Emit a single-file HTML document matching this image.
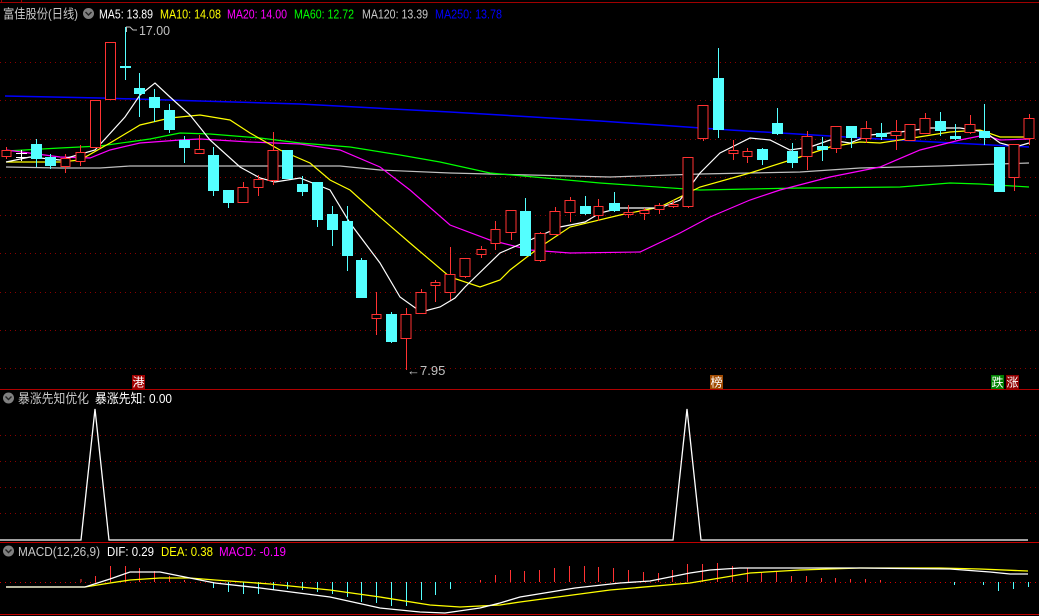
<!DOCTYPE html>
<html><head><meta charset="utf-8"><style>
html,body{margin:0;padding:0;background:#000;width:1039px;height:616px;overflow:hidden}
svg{position:absolute;left:0;top:0}
text{font-family:"Liberation Sans","Noto Sans CJK SC",sans-serif;font-size:13px}
</style></head><body>
<svg width="1039" height="616" viewBox="0 0 1039 616" xmlns="http://www.w3.org/2000/svg">
<rect width="1039" height="616" fill="#000"/>
<line x1="0" y1="2.5" x2="1039" y2="2.5" stroke="#a00000"/>
<line x1="1.5" y1="0" x2="1.5" y2="3" stroke="#a00000"/>
<line x1="21.5" y1="0" x2="21.5" y2="3" stroke="#a00000"/>
<line x1="0" y1="389.5" x2="1039" y2="389.5" stroke="#b00000"/>
<line x1="0" y1="542.5" x2="1039" y2="542.5" stroke="#c00000"/>
<line x1="0" y1="614.5" x2="1039" y2="614.5" stroke="#c00000"/>
<g stroke="#8a0000" stroke-dasharray="1,4">
<line x1="0" y1="62.5" x2="1039" y2="62.5"/>
<line x1="0" y1="100.5" x2="1039" y2="100.5"/>
<line x1="0" y1="139.5" x2="1039" y2="139.5"/>
<line x1="0" y1="177.5" x2="1039" y2="177.5"/>
<line x1="0" y1="215.5" x2="1039" y2="215.5"/>
<line x1="0" y1="253.5" x2="1039" y2="253.5"/>
<line x1="0" y1="292.5" x2="1039" y2="292.5"/>
<line x1="0" y1="330.5" x2="1039" y2="330.5"/>
<line x1="0" y1="368.5" x2="1039" y2="368.5"/>
<line x1="0" y1="435.5" x2="1039" y2="435.5"/>
<line x1="0" y1="461.5" x2="1039" y2="461.5"/>
<line x1="0" y1="487.5" x2="1039" y2="487.5"/>
<line x1="0" y1="513.5" x2="1039" y2="513.5"/>
<line x1="0" y1="582.5" x2="1039" y2="582.5" stroke="#d00000"/>
</g>
<g fill="none" stroke-width="1.2">
<polyline stroke="#0000ff" stroke-width="1.5" points="5,96 100,98 200,101 300,104 450,112 600,121 730,130 897,140 1029,147"/>
<polyline stroke="#c0c0c0" points="6,167 60,168 100,168 130,166 340,166 380,170 450,173 530,175 610,177 700,174 800,172 860,168 940,166 1029,163"/>
<polyline stroke="#00ff00" points="6,151 60,148 100,146 150,139 180,133 210,134 260,138 300,143 350,147 400,155 440,162 490,173 600,183 700,190 800,188 900,187 950,183 980,184 1029,187"/>
<polyline stroke="#ff00ff" points="6,150 60,157 90,158 110,150 140,143 180,140 200,139 250,142 300,144 340,150 380,167 410,190 450,225 490,240 530,250 570,253 640,252 680,233 710,217 750,200 780,190 830,177 880,167 920,150 960,140 985,135 1000,140 1029,139"/>
<polyline stroke="#ffff00" points="6,162 60,162 80,160 110,143 140,125 170,118 200,115 230,120 250,133 280,150 310,163 330,180 350,190 380,217 410,243 450,277 480,287 500,280 510,270 540,247 570,227 620,215 660,207 700,187 750,173 800,157 830,147 860,142 880,143 900,140 950,132 980,130 1000,137 1029,137"/>
<polyline stroke="#ffffff" points="6,162 30,157 60,160 95,150 125,117 140,95 155,83 170,97 190,115 210,140 240,167 260,178 275,182 300,178 330,190 350,223 380,263 400,297 421,312 440,307 455,298 465,287 500,253 530,240 560,227 585,222 600,213 620,208 660,208 680,200 700,173 720,153 750,138 770,140 790,150 810,147 830,140 850,143 870,135 900,132 930,128 960,128 985,132 1000,143 1015,147 1029,143"/>
</g>
<g stroke-width="1">
<g stroke="#ff3232" fill="#000">
<line x1="6.5" y1="147" x2="6.5" y2="159"/><rect x="2" y="150.5" width="9" height="6"/>
<line x1="65.5" y1="154" x2="65.5" y2="173"/><rect x="61" y="158.5" width="9" height="8"/>
<line x1="80.5" y1="145" x2="80.5" y2="166"/><rect x="76" y="152.5" width="9" height="9"/>
<rect x="90.5" y="100.5" width="10" height="47"/>
<rect x="105.5" y="42.5" width="10" height="57"/>
<line x1="199.5" y1="135" x2="199.5" y2="153"/><rect x="195" y="149.5" width="9" height="4"/>
<line x1="243.5" y1="182" x2="243.5" y2="203"/><rect x="238" y="187.5" width="10" height="15"/>
<line x1="258.5" y1="175" x2="258.5" y2="196"/><rect x="254" y="179.5" width="9" height="8"/>
<line x1="273.5" y1="132" x2="273.5" y2="185"/><rect x="268" y="150.5" width="10" height="30"/>
<line x1="376.5" y1="292" x2="376.5" y2="335"/><rect x="372" y="314.5" width="9" height="4"/>
<line x1="406.5" y1="308" x2="406.5" y2="370"/><rect x="401" y="314.5" width="10" height="24"/>
<line x1="421.5" y1="289" x2="421.5" y2="314"/><rect x="416" y="292.5" width="10" height="21"/>
<line x1="435.5" y1="280" x2="435.5" y2="302"/><rect x="431" y="282.5" width="9" height="3"/>
<line x1="450.5" y1="247" x2="450.5" y2="300"/><rect x="445" y="274.5" width="10" height="18"/>
<line x1="465.5" y1="258" x2="465.5" y2="278"/><rect x="460" y="258.5" width="10" height="18"/>
<line x1="481.5" y1="246" x2="481.5" y2="258"/><rect x="477" y="249.5" width="9" height="5"/>
<line x1="495.5" y1="221" x2="495.5" y2="250"/><rect x="491" y="229.5" width="9" height="14"/>
<line x1="511.5" y1="210" x2="511.5" y2="240"/><rect x="506" y="210.5" width="10" height="22"/>
<line x1="540.5" y1="232" x2="540.5" y2="262"/><rect x="535" y="233.5" width="10" height="27"/>
<line x1="555.5" y1="207" x2="555.5" y2="235"/><rect x="550" y="211.5" width="10" height="23"/>
<line x1="570.5" y1="197" x2="570.5" y2="222"/><rect x="565" y="200.5" width="10" height="12"/>
<line x1="598.5" y1="199" x2="598.5" y2="221"/><rect x="594" y="206.5" width="9" height="9"/>
<line x1="628.5" y1="205" x2="628.5" y2="218"/><rect x="624" y="212.5" width="9" height="2"/>
<line x1="644.5" y1="208" x2="644.5" y2="220"/><rect x="640" y="210.5" width="9" height="3"/>
<line x1="659.5" y1="203" x2="659.5" y2="214"/><rect x="655" y="205.5" width="9" height="4"/>
<line x1="673.5" y1="200" x2="673.5" y2="208"/><rect x="669" y="204.5" width="9" height="2"/>
<line x1="688.5" y1="157" x2="688.5" y2="208"/><rect x="683" y="157.5" width="10" height="49"/>
<line x1="703.5" y1="105" x2="703.5" y2="141"/><rect x="698" y="105.5" width="10" height="33"/>
<line x1="733.5" y1="140" x2="733.5" y2="160"/><rect x="729" y="150.5" width="9" height="3"/>
<line x1="747.5" y1="148" x2="747.5" y2="163"/><rect x="743" y="151.5" width="9" height="5"/>
<line x1="807.5" y1="131" x2="807.5" y2="170"/><rect x="802" y="136.5" width="10" height="20"/>
<line x1="836.5" y1="126" x2="836.5" y2="153"/><rect x="831" y="126.5" width="10" height="22"/>
<line x1="866.5" y1="121" x2="866.5" y2="143"/><rect x="861" y="128.5" width="10" height="10"/>
<line x1="896.5" y1="120" x2="896.5" y2="150"/><rect x="891" y="131.5" width="10" height="4"/>
<rect x="905" y="124.5" width="10" height="16"/>
<line x1="925.5" y1="113" x2="925.5" y2="134"/><rect x="920" y="118.5" width="10" height="15"/>
<line x1="970.5" y1="115" x2="970.5" y2="134"/><rect x="965" y="124.5" width="10" height="8"/>
<line x1="1014.5" y1="144" x2="1014.5" y2="191"/><rect x="1009" y="144.5" width="10" height="33"/>
<line x1="1029.5" y1="114" x2="1029.5" y2="145"/><rect x="1024" y="118.5" width="10" height="20"/>
</g>
<g stroke="#54ffff" fill="#54ffff">
<line x1="36.5" y1="139" x2="36.5" y2="167"/><rect x="31.5" y="144.5" width="10" height="14"/>
<line x1="50.5" y1="154" x2="50.5" y2="169"/><rect x="45.5" y="157.5" width="10" height="8"/>
<line x1="125.5" y1="27" x2="125.5" y2="80"/><rect x="120.5" y="66.5" width="10" height="1"/>
<line x1="139.5" y1="73" x2="139.5" y2="117"/><rect x="134.5" y="88.5" width="10" height="5"/>
<line x1="154.5" y1="89" x2="154.5" y2="122"/><rect x="149.5" y="97.5" width="10" height="10"/>
<line x1="169.5" y1="104" x2="169.5" y2="133"/><rect x="164.5" y="110.5" width="10" height="19"/>
<line x1="184.5" y1="136" x2="184.5" y2="163"/><rect x="179.5" y="140.5" width="10" height="7"/>
<line x1="213.5" y1="147" x2="213.5" y2="196"/><rect x="208.5" y="155.5" width="10" height="35"/>
<line x1="228.5" y1="190" x2="228.5" y2="208"/><rect x="223.5" y="190.5" width="10" height="12"/>
<rect x="282.5" y="150.5" width="10" height="28"/>
<line x1="302.5" y1="176" x2="302.5" y2="196"/><rect x="297.5" y="184.5" width="10" height="7"/>
<line x1="317.5" y1="182" x2="317.5" y2="227"/><rect x="312.5" y="182.5" width="10" height="37"/>
<line x1="332.5" y1="206" x2="332.5" y2="246"/><rect x="327.5" y="214.5" width="10" height="15"/>
<line x1="347.5" y1="206" x2="347.5" y2="271"/><rect x="342.5" y="221.5" width="10" height="34"/>
<line x1="361.5" y1="258" x2="361.5" y2="297"/><rect x="356.5" y="260.5" width="10" height="37"/>
<line x1="391.5" y1="312" x2="391.5" y2="343"/><rect x="386.5" y="314.5" width="10" height="27"/>
<line x1="525.5" y1="198" x2="525.5" y2="256"/><rect x="520.5" y="211.5" width="10" height="44"/>
<line x1="585.5" y1="196" x2="585.5" y2="215"/><rect x="580.5" y="206.5" width="10" height="7"/>
<line x1="614.5" y1="192" x2="614.5" y2="212"/><rect x="609.5" y="203.5" width="10" height="7"/>
<line x1="718.5" y1="48" x2="718.5" y2="138"/><rect x="713.5" y="78.5" width="10" height="51"/>
<line x1="762.5" y1="148" x2="762.5" y2="165"/><rect x="757.5" y="149.5" width="10" height="10"/>
<line x1="777.5" y1="108" x2="777.5" y2="135"/><rect x="772.5" y="123.5" width="10" height="10"/>
<line x1="792.5" y1="143" x2="792.5" y2="168"/><rect x="787.5" y="151.5" width="10" height="11"/>
<line x1="822.5" y1="137" x2="822.5" y2="161"/><rect x="817.5" y="146.5" width="10" height="3"/>
<line x1="851.5" y1="126" x2="851.5" y2="148"/><rect x="846.5" y="126.5" width="10" height="11"/>
<line x1="881.5" y1="123" x2="881.5" y2="140"/><rect x="876.5" y="133.5" width="10" height="3"/>
<line x1="940.5" y1="112" x2="940.5" y2="136"/><rect x="935.5" y="121.5" width="10" height="9"/>
<line x1="955.5" y1="124" x2="955.5" y2="140"/><rect x="950.5" y="136.5" width="10" height="2"/>
<line x1="984.5" y1="104" x2="984.5" y2="145"/><rect x="979.5" y="131.5" width="10" height="6"/>
<rect x="994.5" y="147.5" width="10" height="44"/>
</g>
<g stroke="#fff"><line x1="21.5" y1="150" x2="21.5" y2="161"/><line x1="16" y1="153.5" x2="27" y2="153.5"/><line x1="16" y1="157.5" x2="27" y2="157.5"/></g>
</g>
<polyline points="126.5,32 126.5,27 130,27 133,30 137,30" fill="none" stroke="#c0c0c0"/>
<text x="139" y="35" fill="#c0c0c0" textLength="31" lengthAdjust="spacingAndGlyphs">17.00</text>
<text x="407" y="375" fill="#c0c0c0">←7.95</text>
<rect x="132" y="375" width="13" height="14" fill="#a00000"/><text x="132.5" y="386.5" fill="#fff" style="font-size:12px">港</text>
<rect x="710" y="375" width="13" height="14" fill="#a04a00"/><text x="710.5" y="386.5" fill="#fff" style="font-size:12px">榜</text>
<rect x="991" y="375" width="13" height="14" fill="#008000"/><text x="991.5" y="386.5" fill="#fff" style="font-size:12px">跌</text>
<rect x="1006" y="375" width="13" height="14" fill="#900000"/><text x="1006.5" y="386.5" fill="#fff" style="font-size:12px">涨</text>
<polyline points="0,540 81,540 95,409 109,540 673,540 687,409 701,540 1028,540" fill="none" stroke="#fff" stroke-width="1.3"/>
<g stroke="#ff3232">
<line x1="81" y1="582" x2="81" y2="579"/><line x1="95.5" y1="582" x2="95.5" y2="576"/><line x1="110.5" y1="582" x2="110.5" y2="566"/><line x1="125.5" y1="582" x2="125.5" y2="566"/><line x1="139.5" y1="582" x2="139.5" y2="568"/><line x1="154.5" y1="582" x2="154.5" y2="571"/><line x1="169.5" y1="582" x2="169.5" y2="576"/><line x1="184.5" y1="582" x2="184.5" y2="580"/>
<line x1="480.5" y1="582" x2="480.5" y2="580"/><line x1="495.5" y1="582" x2="495.5" y2="575"/><line x1="510.5" y1="582" x2="510.5" y2="570"/><line x1="524.5" y1="582" x2="524.5" y2="571"/><line x1="539.5" y1="582" x2="539.5" y2="570"/><line x1="554.5" y1="582" x2="554.5" y2="568"/><line x1="569.5" y1="582" x2="569.5" y2="566"/><line x1="584.5" y1="582" x2="584.5" y2="566"/><line x1="598.5" y1="582" x2="598.5" y2="567"/><line x1="613.5" y1="582" x2="613.5" y2="568"/><line x1="628.5" y1="582" x2="628.5" y2="570"/><line x1="643.5" y1="582" x2="643.5" y2="572"/><line x1="658.5" y1="582" x2="658.5" y2="573"/><line x1="672.5" y1="582" x2="672.5" y2="570"/><line x1="687.5" y1="582" x2="687.5" y2="564"/><line x1="702.5" y1="582" x2="702.5" y2="564"/><line x1="717.5" y1="582" x2="717.5" y2="563"/><line x1="732.5" y1="582" x2="732.5" y2="566"/><line x1="747.5" y1="582" x2="747.5" y2="568"/><line x1="761.5" y1="582" x2="761.5" y2="572"/><line x1="776.5" y1="582" x2="776.5" y2="572"/><line x1="791.5" y1="582" x2="791.5" y2="576"/><line x1="806.5" y1="582" x2="806.5" y2="576"/><line x1="821.5" y1="582" x2="821.5" y2="578"/><line x1="835.5" y1="582" x2="835.5" y2="578"/><line x1="850.5" y1="582" x2="850.5" y2="579"/><line x1="865.5" y1="582" x2="865.5" y2="579"/><line x1="880.5" y1="582" x2="880.5" y2="580"/>
</g>
<g stroke="#54ffff">
<line x1="213.5" y1="582" x2="213.5" y2="588"/><line x1="228.5" y1="582" x2="228.5" y2="592"/><line x1="243.5" y1="582" x2="243.5" y2="594"/><line x1="258.5" y1="582" x2="258.5" y2="594"/><line x1="273.5" y1="582" x2="273.5" y2="590"/><line x1="287.5" y1="582" x2="287.5" y2="589"/><line x1="302.5" y1="582" x2="302.5" y2="590"/><line x1="317.5" y1="582" x2="317.5" y2="592"/><line x1="332.5" y1="582" x2="332.5" y2="594"/><line x1="347.5" y1="582" x2="347.5" y2="597"/><line x1="361.5" y1="582" x2="361.5" y2="602"/><line x1="376.5" y1="582" x2="376.5" y2="603"/><line x1="391.5" y1="582" x2="391.5" y2="606"/><line x1="406.5" y1="582" x2="406.5" y2="606"/><line x1="421.5" y1="582" x2="421.5" y2="600"/><line x1="435.5" y1="582" x2="435.5" y2="595"/><line x1="450.5" y1="582" x2="450.5" y2="589"/>
<line x1="954.5" y1="582" x2="954.5" y2="585"/><line x1="983.5" y1="582" x2="983.5" y2="585"/><line x1="998.5" y1="582" x2="998.5" y2="591"/><line x1="1013.5" y1="582" x2="1013.5" y2="589"/><line x1="1028.5" y1="582" x2="1028.5" y2="587"/>
</g>
<polyline fill="none" stroke="#ffff00" stroke-width="1.3" points="6,587 85,587 110,583 130,580 160,578 190,578 215,580 270,584 330,590 380,597 430,605 460,607 500,605 520,602 610,590 690,583 750,573 800,570 860,568 940,568 980,569 1028,571"/>
<polyline fill="none" stroke="#fff" stroke-width="1.3" points="6,587 85,587 110,579 130,572 160,572 215,583 260,588 330,597 380,608 420,612 445,613 480,608 500,603 520,597 575,588 620,583 650,581 690,573 710,570 740,568 860,568 950,569 990,572 1010,574 1028,574"/>
<text x="3" y="18.5" fill="#c8c8c8" textLength="75" lengthAdjust="spacingAndGlyphs">富佳股份(日线)</text>
<circle cx="88.5" cy="13.5" r="5.5" fill="#808080"/><polyline points="85.5,12 88.5,15 91.5,12" fill="none" stroke="#222" stroke-width="1.4"/>
<text x="99" y="18.5" fill="#fff" textLength="54" lengthAdjust="spacingAndGlyphs">MA5: 13.89</text>
<text x="160" y="18.5" fill="#ffff00" textLength="61" lengthAdjust="spacingAndGlyphs">MA10: 14.08</text>
<text x="227" y="18.5" fill="#ff00ff" textLength="60" lengthAdjust="spacingAndGlyphs">MA20: 14.00</text>
<text x="294" y="18.5" fill="#00ff00" textLength="60" lengthAdjust="spacingAndGlyphs">MA60: 12.72</text>
<text x="362" y="18.5" fill="#c8c8c8" textLength="66" lengthAdjust="spacingAndGlyphs">MA120: 13.39</text>
<text x="435" y="18.5" fill="#0000ff" textLength="67" lengthAdjust="spacingAndGlyphs">MA250: 13.78</text>
<circle cx="8.5" cy="398" r="5.5" fill="#808080"/><polyline points="5.5,396.5 8.5,399.5 11.5,396.5" fill="none" stroke="#222" stroke-width="1.4"/>
<text x="18" y="403" fill="#c8c8c8" textLength="71" lengthAdjust="spacingAndGlyphs">暴涨先知优化</text>
<text x="95" y="403" fill="#fff" textLength="77" lengthAdjust="spacingAndGlyphs">暴涨先知: 0.00</text>
<circle cx="8.5" cy="551" r="5.5" fill="#808080"/><polyline points="5.5,549.5 8.5,552.5 11.5,549.5" fill="none" stroke="#222" stroke-width="1.4"/>
<text x="18" y="556" fill="#c8c8c8" textLength="82" lengthAdjust="spacingAndGlyphs">MACD(12,26,9)</text>
<text x="107" y="556" fill="#fff" textLength="47" lengthAdjust="spacingAndGlyphs">DIF: 0.29</text>
<text x="161" y="556" fill="#ffff00" textLength="52" lengthAdjust="spacingAndGlyphs">DEA: 0.38</text>
<text x="219" y="556" fill="#ff00ff" textLength="67" lengthAdjust="spacingAndGlyphs">MACD: -0.19</text>
</svg>
</body></html>
